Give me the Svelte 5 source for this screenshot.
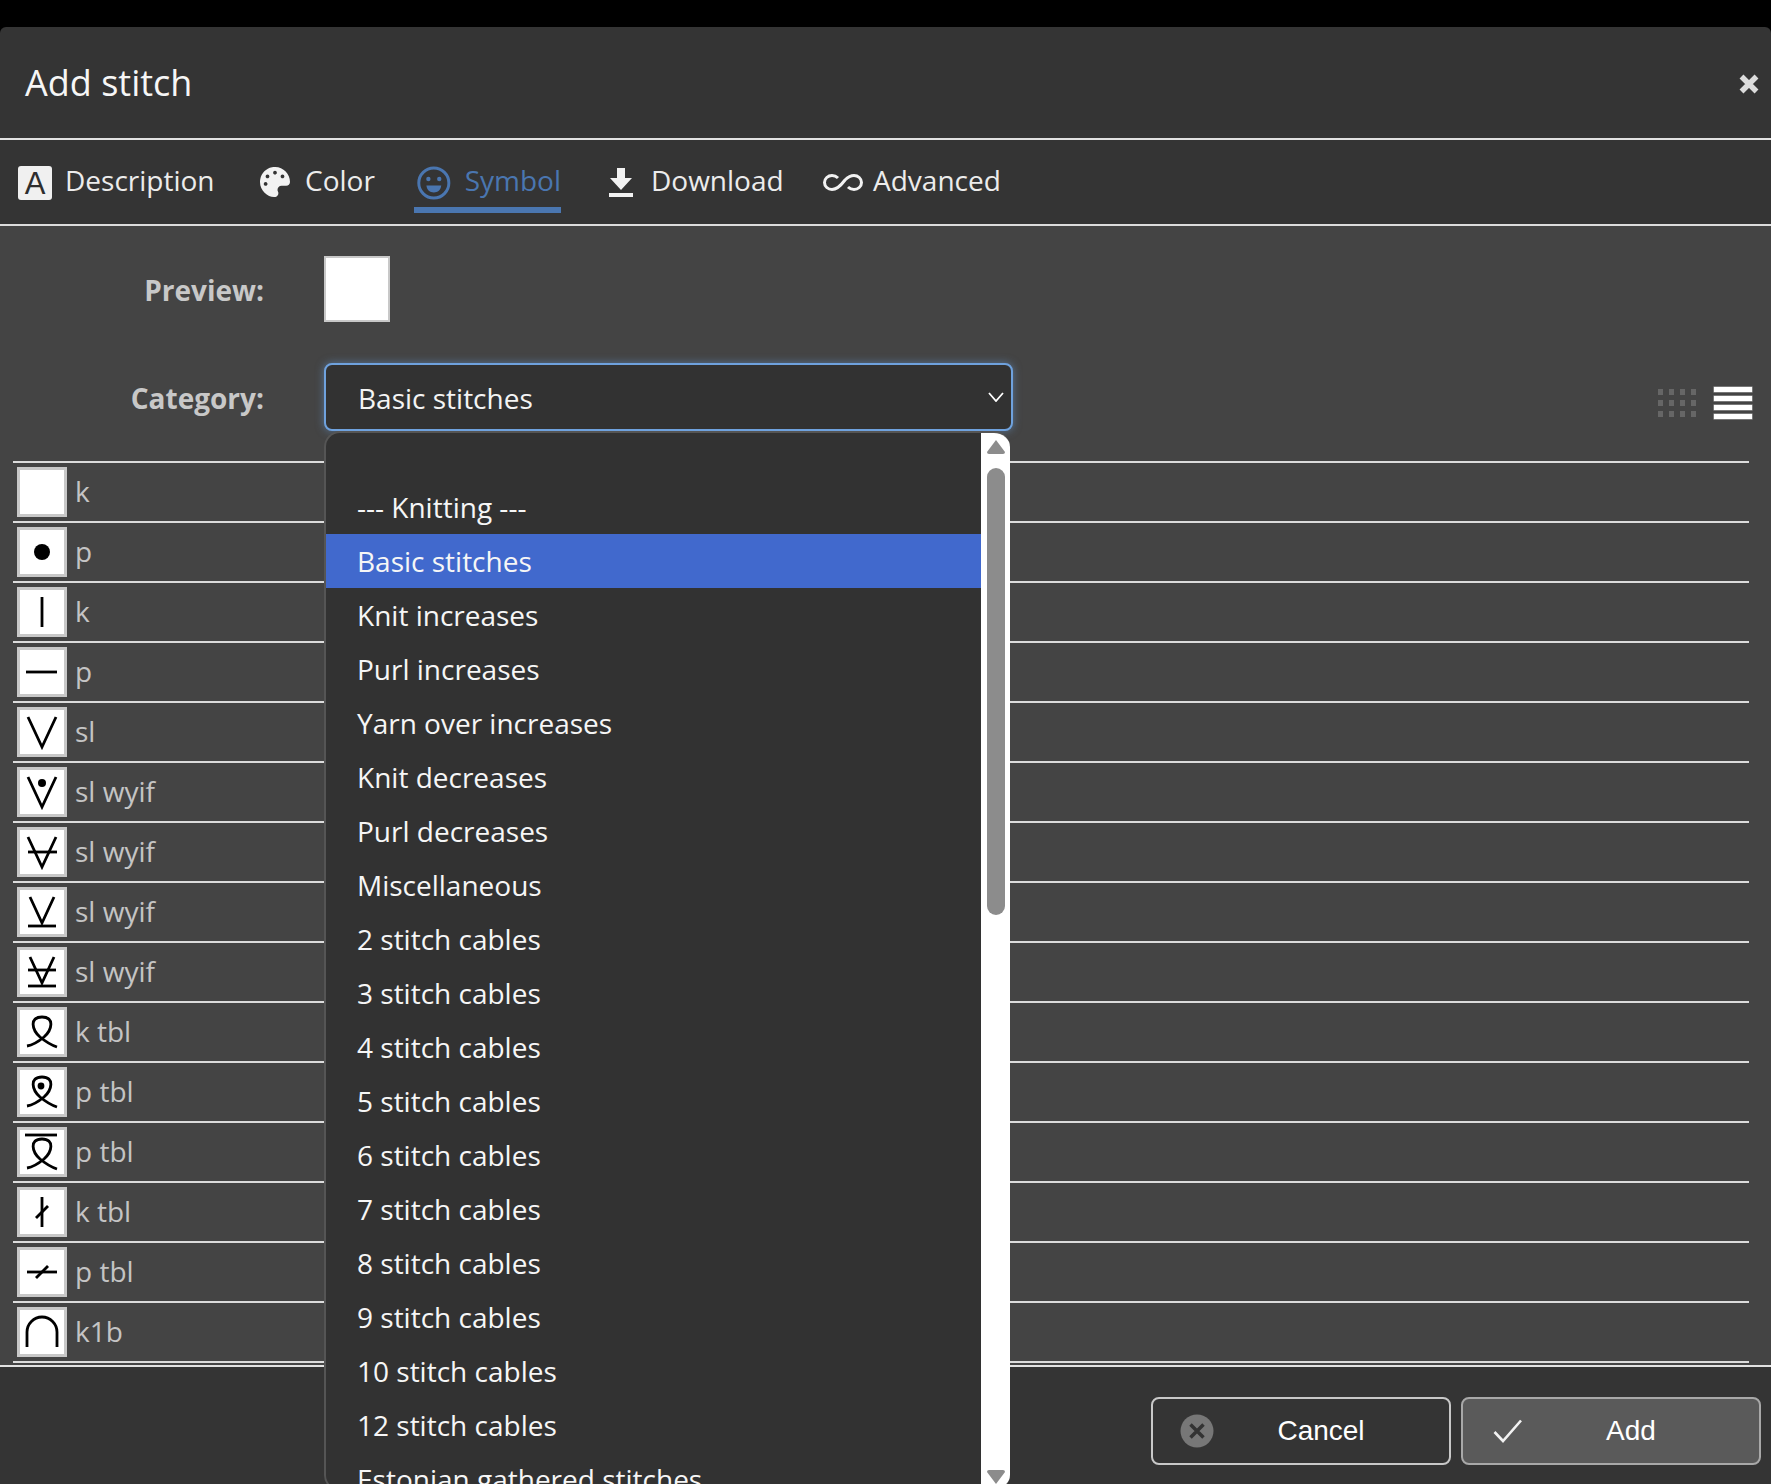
<script>
  const loop = 'M10 39C16 38 21 35 27 30C35 23 38 10 25 10C12 10 15 23 23 30C29 35 34 38 40 40';
  const loopLow = 'M10 41C16 40 21 37 27 32C35 25 38 12 25 12C12 12 15 25 23 32C29 37 34 40 40 42';
  const rows = [
    { label: 'k', paths: [], circles: [] },
    { label: 'p', paths: [], circles: [[25, 25, 8]] },
    { label: 'k', paths: ['M25 10V40'], circles: [] },
    { label: 'p', paths: ['M9 25H40'], circles: [] },
    { label: 'sl', paths: ['M11 10L25 40L39 10'], circles: [] },
    { label: 'sl wyif', paths: ['M11 10L25 40L39 10'], circles: [[25, 16, 4]] },
    { label: 'sl wyif', paths: ['M11 10L25 40L39 10', 'M11 25H40'], circles: [] },
    { label: 'sl wyif', paths: ['M13 10L25 36L37 10', 'M11 39H39'], circles: [] },
    { label: 'sl wyif', paths: ['M13 10L25 36L37 10', 'M11 23H39', 'M11 39H39'], circles: [] },
    { label: 'k tbl', paths: [loop], circles: [] },
    { label: 'p tbl', paths: [loop], circles: [[24, 19, 3.4]] },
    { label: 'p tbl', paths: [loopLow, 'M8 8H40'], circles: [] },
    { label: 'k tbl', paths: ['M25 10V40', 'M19 31L31 19'], circles: [] },
    { label: 'p tbl', paths: ['M10 25H40', 'M19 31L31 19'], circles: [] },
    { label: 'k1b', paths: ['M10 40V25A15 15 0 0 1 40 25V40'], circles: [] }
  ];
  const options = ['Knit increases', 'Purl increases', 'Yarn over increases', 'Knit decreases', 'Purl decreases', 'Miscellaneous', '2 stitch cables', '3 stitch cables', '4 stitch cables', '5 stitch cables', '6 stitch cables', '7 stitch cables', '8 stitch cables', '9 stitch cables', '10 stitch cables', '12 stitch cables', 'Estonian gathered stitches'];
  const gridDots = Array.from({ length: 12 });
</script>

<div class="page">
  <div class="modal">
    <header class="head">
      <span class="title">Add stitch</span>
      <svg class="close" width="20" height="20" viewBox="0 0 20 20" stroke="#dcdcdc" stroke-width="5.500" fill="none"><path d="M2.500 2.500L17.500 17.500M17.500 2.500L2.500 17.500"/></svg>
    </header>

    <nav class="tabs">
      <div class="tab t-desc"><span class="a-box">A</span><span>Description</span></div>
      <div class="tab t-color">
        <svg width="30" height="30" viewBox="0 0 512 512" fill="#f2f2f2"><path d="M204.3 5C104.9 24.4 24.8 104.3 5.2 203.4c-37 187 131.7 326.4 258.8 306.7 41.2-6.4 61.4-54.6 42.5-91.7-23.1-45.4 9.9-98.4 60.9-98.4h79.7c35.8 0 64.8-29.6 64.9-65.3C511.5 97.1 368.1-26.9 204.3 5zM96 320c-17.7 0-32-14.3-32-32s14.3-32 32-32 32 14.3 32 32-14.3 32-32 32zm32-128c-17.7 0-32-14.3-32-32s14.3-32 32-32 32 14.3 32 32-14.3 32-32 32zm128-64c-17.7 0-32-14.3-32-32s14.3-32 32-32 32 14.3 32 32-14.3 32-32 32zm128 64c-17.7 0-32-14.3-32-32s14.3-32 32-32 32 14.3 32 32-14.3 32-32 32z"/></svg>
        <span>Color</span>
      </div>
      <div class="tab t-sym active">
        <svg width="34" height="34" viewBox="0 0 34 34"><circle cx="17" cy="17" r="15.2" fill="none" stroke="#4a76b0" stroke-width="3"/><circle cx="11.5" cy="13" r="2.2" fill="#4a76b0"/><circle cx="22.5" cy="13" r="2.2" fill="#4a76b0"/><path d="M9.5 19.5H24.5C24 24 21 26.5 17 26.5S10 24 9.5 19.5Z" fill="#4a76b0"/></svg>
        <span>Symbol</span>
      </div>
      <div class="tab t-down">
        <svg width="24" height="30" viewBox="0 0 24 30" fill="#f2f2f2"><path d="M8 0H16V10H23L12 22L1 10H8Z"/><rect y="25" width="24" height="4"/></svg>
        <span>Download</span>
      </div>
      <div class="tab t-adv">
        <svg width="40" height="17" viewBox="0 0 40 17" fill="none" stroke="#f2f2f2" stroke-width="3"><path d="M15 4C13 2 11 1.500 9 1.500C5 1.500 1.500 4.500 1.500 8.500C1.500 12.500 5 15.500 9 15.500C15 15.500 19 10 22 6C25 3 28 1.500 31 1.500C35 1.500 38.500 4.500 38.500 8.500C38.500 12.500 35 15.500 31 15.500C29 15.500 27 15 25 13"/></svg>
        <span>Advanced</span>
      </div>
    </nav>

    <main class="body">
      <div class="form-row preview-row">
        <span class="label">Preview:</span>
        <div class="preview"></div>
      </div>
      <div class="form-row cat-row">
        <span class="label">Category:</span>
        <div class="select-wrap">
          <div class="select">
            <span>Basic stitches</span>
            <svg width="16" height="10" viewBox="0 0 16 10" fill="none" stroke="#fff" stroke-width="1.800"><path d="M1 1L8 9L15 1"/></svg>
          </div>
          <div class="dropdown">
            <div class="list">
              <div class="opt blank"></div>
              <div class="opt">--- Knitting ---</div>
              <div class="opt selected">Basic stitches</div>
              {#each options as o}
                <div class="opt">{o}</div>
              {/each}
            </div>
            <div class="scrollbar">
              <svg class="arrow" width="18" height="14" viewBox="0 0 18 14"><path d="M9 0L18 12Q18 14 16 14H2Q0 14 0 12Z" fill="#8c8c8c"/></svg>
              <div class="thumb"></div>
              <svg class="arrow down" width="18" height="14" viewBox="0 0 18 14"><path d="M9 14L18 2Q18 0 16 0H2Q0 0 0 2Z" fill="#8c8c8c"/></svg>
            </div>
          </div>
        </div>
        <div class="views">
          <div class="grid-icon">
            {#each gridDots as _}<i></i>{/each}
          </div>
          <div class="list-icon"><i></i><i></i><i></i><i></i></div>
        </div>
      </div>

      <div class="rows">
        {#each rows as r}
          <div class="row">
            <div class="sym">
              <svg width="44" height="44" viewBox="3 3 44 44" fill="none" stroke="#000" stroke-width="2.800">
                {#each r.paths as d}<path {d} />{/each}
                {#each r.circles as c}<circle cx={c[0]} cy={c[1]} r={c[2]} fill="#000" stroke="none" />{/each}
              </svg>
            </div>
            <span class="name">{r.label}</span>
          </div>
        {/each}
      </div>
    </main>

    <footer class="foot">
      <button class="btn cancel">
        <svg class="btn-icon" width="34" height="34" viewBox="0 0 34 34"><circle cx="17" cy="17" r="16.500" fill="#777"/><path d="M10.500 10.500L23.500 23.500M23.500 10.500L10.500 23.500" stroke="#333" stroke-width="3.500"/></svg>
        <span>Cancel</span>
      </button>
      <button class="btn add">
        <svg class="btn-icon" width="30" height="24" viewBox="0 0 30 24" fill="none" stroke="#f2f2f2" stroke-width="2.600"><path d="M1.500 13L10 22L28 1.500"/></svg>
        <span>Add</span>
      </button>
    </footer>
  </div>
</div>

<style>
  :global(body) { margin: 0; background: #000; }
  * { box-sizing: border-box; }
  .page {
    height: 1484px;
    padding-top: 27px;
    overflow: hidden;
    background: #000;
    font-family: "Open Sans", "Noto Sans", sans-serif;
    color: #fff;
  }
  .modal {
    display: flex;
    flex-direction: column;
    height: 1457px;
    background: #343434;
    border-radius: 6px 6px 0 0;
  }
  .head {
    display: flex;
    justify-content: space-between;
    align-items: center;
    height: 113px;
    padding: 0 12px 0 25px;
    border-bottom: 2px solid #e2e2e2;
    flex: none;
  }
  .title { font-size: 36px; color: #f6f6f6; }
  .close { margin-top: 3px; flex: none; }
  .tabs {
    display: flex;
    height: 86px;
    border-bottom: 2px solid #dcdcdc;
    padding-left: 18px;
    flex: none;
    position: relative;
    font-size: 28px;
    color: #ececec;
  }
  .tab {
    display: flex;
    align-items: center;
    height: 84px;
    padding-bottom: 4px;
    flex: none;
  }
  .a-box {
    width: 34px;
    height: 34px;
    background: #f0f0f0;
    border-radius: 3px;
    color: #2e2e2e;
    font-family: "Liberation Sans", Arial, sans-serif;
    font-size: 31px;
    line-height: 36px;
    text-align: center;
    margin-right: 13px;
    margin-top: 6px;
  }
  .t-desc { width: 242px; }
  .t-color { width: 154px; }
  .t-color svg { margin-right: 15px; margin-top: 4px; }
  .t-sym {
    width: 147px;
    margin-right: 48px;
    color: #4a76b0;
    padding-left: 3px;
    position: relative;
  }
  .t-sym svg { margin-right: 14px; margin-top: 6px; }
  .t-sym::after {
    content: "";
    position: absolute;
    left: 0;
    right: 0;
    top: 67px;
    height: 6px;
    background: #4a76b0;
  }
  .t-down { width: 214px; }
  .t-down svg { margin-right: 18px; margin-top: 6px; }
  .t-adv svg { margin-right: 10px; margin-top: 4px; }
  .body {
    flex: none;
    height: 1139px;
    background: #444;
    padding-top: 30px;
  }
  .form-row { display: flex; }
  .label {
    width: 264px;
    text-align: right;
    font-weight: 700;
    font-size: 28px;
    color: #c8c8c8;
    margin-right: 60px;
    margin-top: 2px;
    flex: none;
  }
  .preview-row { height: 66px; align-items: center; }
  .preview {
    width: 66px;
    height: 66px;
    background: #fff;
    border: 2px solid #c8c8c8;
  }
  .cat-row {
    height: 66px;
    margin-top: 42px;
    align-items: center;
    position: relative;
    padding-right: 19px;
  }
  .select-wrap {
    position: relative;
    width: 689px;
    flex: none;
    z-index: 2;
  }
  .select {
    display: flex;
    justify-content: space-between;
    align-items: center;
    height: 68px;
    margin: -1px 0;
    padding: 2px 7px 0 32px;
    background: #323232;
    border: 2px solid #6fa2de;
    border-radius: 8px;
    box-shadow: 0 0 8px rgba(110, 165, 230, 0.5);
    font-size: 28px;
    color: #f4f4f4;
  }
  .select svg { margin-top: -2px; }
  .dropdown {
    position: absolute;
    left: 0;
    top: 67px;
    width: 686px;
    height: 1060px;
    display: flex;
    background: #323232;
    border: 2px solid #555;
    border-right: 0;
    border-radius: 16px;
    overflow: hidden;
  }
  .list { flex: 1; min-width: 0; }
  .opt {
    height: 54px;
    line-height: 54px;
    padding-left: 31px;
    font-size: 28px;
    color: #f6f6f6;
    white-space: nowrap;
  }
  .opt.blank { height: 47px; }
  .opt.selected { background: #4169cd; }
  .scrollbar {
    width: 29px;
    flex: none;
    background: #fff;
    display: flex;
    flex-direction: column;
    align-items: center;
    padding-top: 7px;
    position: relative;
  }
  .thumb {
    width: 18px;
    height: 447px;
    margin-top: 14px;
    border-radius: 9px;
    background: #8c8c8c;
  }
  .arrow.down { margin-top: auto; margin-bottom: 5px; }
  .views {
    margin-left: auto;
    margin-top: 12px;
    display: flex;
    align-items: center;
    gap: 18px;
  }
  .grid-icon {
    display: grid;
    grid-template-columns: repeat(4, 5px);
    grid-auto-rows: 6px;
    column-gap: 6px;
    row-gap: 5px;
  }
  .grid-icon i { background: #666; }
  .list-icon {
    width: 38px;
    display: flex;
    flex-direction: column;
    gap: 4px;
  }
  .list-icon i {
    height: 5px;
    background: #fff;
    box-shadow: 0 0 0 0.500px #aaa;
  }
  .rows {
    margin: 31px 22px 0 13px;
    border-bottom: 2px solid #dcdcdc;
  }
  .row {
    height: 60px;
    border-top: 2px solid #dcdcdc;
    display: flex;
    align-items: center;
    padding-left: 4px;
  }
  .sym {
    width: 50px;
    height: 50px;
    background: #fff;
    border: 3px solid #c8c8c8;
    display: flex;
    flex: none;
  }
  .name {
    margin-left: 8px;
    margin-bottom: 2px;
    font-size: 28px;
    color: #c4c4c4;
  }
  .foot {
    flex: 1;
    border-top: 2px solid #e2e2e2;
    display: flex;
    justify-content: flex-end;
    align-items: flex-start;
    gap: 10px;
    padding: 30px 10px 0 0;
  }
  .btn {
    position: relative;
    width: 300px;
    height: 68px;
    border-radius: 8px;
    background: #343434;
    border: 2px solid #c8c8c8;
    color: #fff;
    font-family: "Liberation Sans", Arial, sans-serif;
    font-size: 28px;
    display: flex;
    align-items: center;
    justify-content: center;
    padding: 0 0 0 40px;
  }
  .btn.add { background: #5a5a5a; border-color: #a8a8a8; }
  .btn-icon { position: absolute; top: 50%; transform: translateY(-50%); }
  .cancel .btn-icon { left: 27px; }
  .add .btn-icon { left: 30px; }
</style>
